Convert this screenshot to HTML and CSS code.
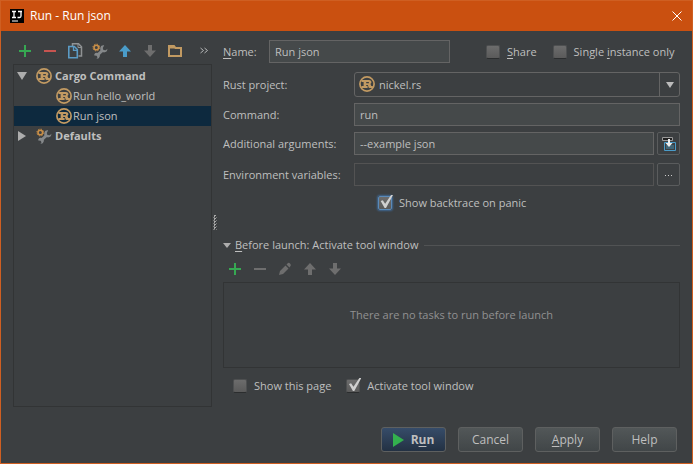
FILE: index.html
```html
<!DOCTYPE html>
<html lang="en">
<head>
<meta charset="utf-8">
<title>Run - Run json</title>
<link rel="stylesheet" href="styles.css">
</head>
<body>
<svg class="sprite" aria-hidden="true">
  <symbol id="plus" viewBox="0 0 16 16"><path d="M7 2h2v5h5v2H9v5H7V9H2V7h5z" shape-rendering="crispEdges"/></symbol>
  <symbol id="minus" viewBox="0 0 16 16"><path d="M2 7h12v2H2z" shape-rendering="crispEdges"/></symbol>
  <symbol id="up" viewBox="0 0 16 16"><path d="M8 2l6 6.500h-4V14H6V8.500H2z"/></symbol>
  <symbol id="down" viewBox="0 0 16 16"><path d="M8 14L2 7.500h4V2h4v5.500h4z"/></symbol>
  <symbol id="rust" viewBox="0 0 16 16">
    <circle cx="8" cy="8" r="7.100" fill="none" stroke="#c29a62" stroke-width="1.700"/>
    <path d="M2.500 4H10c2.600 0 3.300 3 1.300 4.100.9.500.6 1.900 1.200 1.900h1.300v2h-3.300c-1.600 0-.9-2.900-2-2.900H7.200V10h1.400v2H2.500v-2H4.600V6H2.500zM7.200 5.900v1.400h2.100c1 0 1-1.400 0-1.400z" fill="#c29a62" fill-rule="evenodd"/>
  </symbol>
  <symbol id="tools" viewBox="0 0 16 16">
    <path d="M10.500 7.500L5.500 12" stroke="#85888a" stroke-width="3"/>
    <path d="M12.200 2.200a3.600 3.600 0 1 0 3.200 3.600l-1.600 1.500-2.400-.4-.6-2z" fill="#85888a"/>
    <path d="M2.300 11.200a3 3 0 1 1 2.200 4.600l1-1.500-.9-1.600-2.300-.2z" fill="#85888a"/>
    <circle cx="4.300" cy="4.500" r="2.300" fill="none" stroke="#c98f48" stroke-width="1.600"/>
    <circle cx="4.300" cy="4.500" r="3.400" fill="none" stroke="#c98f48" stroke-width="1" stroke-dasharray="1.335 1.335"/>
  </symbol>
</svg>

<div class="window">
  <header class="titlebar">
    <svg class="logo" viewBox="0 0 14 14" aria-hidden="true">
      <path d="M0 0h14v14H0z" fill="#000"/>
      <path d="M2 2.500h4M4 2.500v6M2 8.500h4M8 2.500h4M11 2.500v4.500q0 1.500-1.500 1.500H7.500" fill="none" stroke="#fff" stroke-width="1.300"/>
      <path d="M2 12h6" stroke="#fff"/>
    </svg>
    <h1>Run - Run json</h1>
    <button class="close" aria-label="Close"><svg viewBox="0 0 10 10"><path d="M.5.5l9 9M9.500.5l-9 9" stroke="#fff"/></svg></button>
  </header>

  <main class="content">
    <section class="sidebar" aria-label="Configurations">
      <div class="toolbar">
        <button class="tool green" aria-label="Add"><svg><use href="#plus"/></svg></button>
        <button class="tool red" aria-label="Remove"><svg><use href="#minus"/></svg></button>
        <button class="tool" aria-label="Copy"><svg viewBox="0 0 16 16"><path d="M5.500 3V.8h6l3 3V13h-3" fill="none" stroke="#8f9294" stroke-width="1.500"/><path d="M11 1v3.500h3.500" fill="none" stroke="#8f9294"/><path d="M1.800 3.500h5.500l3 3v8.200H1.800z" fill="#3c3f41" stroke="#5b9bc5" stroke-width="1.600"/><path d="M6.500 3v4.300h4" fill="none" stroke="#5b9bc5" stroke-width="1.300"/></svg></button>
        <button class="tool" aria-label="Edit defaults"><svg><use href="#tools"/></svg></button>
        <button class="tool blue" aria-label="Move up"><svg><use href="#up"/></svg></button>
        <button class="tool gray" aria-label="Move down"><svg><use href="#down"/></svg></button>
        <button class="tool" aria-label="New folder"><svg viewBox="0 0 16 16"><path d="M2 13V3h5l1.500 2H14v8z" fill="none" stroke="#c29a62" stroke-width="2"/><path d="M2 3h5l1 2.500H2z" fill="#c29a62"/></svg></button>
        <button class="tool more" aria-label="More"><svg viewBox="0 0 16 16"><path d="M4.500 5l3 2.500-3 2.500M8.500 5l3 2.500-3 2.500" fill="none" stroke="#b4b6b7"/></svg></button>
      </div>
      <ul class="tree" role="tree">
        <li class="node group" role="treeitem" aria-expanded="true"><svg class="arrow" viewBox="0 0 10 10"><path d="M0 1h10L5 9z"/></svg><svg class="icon"><use href="#rust"/></svg><span>Cargo Command</span></li>
        <li class="node leaf" role="treeitem"><svg class="icon"><use href="#rust"/></svg><span>Run hello_world</span></li>
        <li class="node leaf selected" role="treeitem" aria-selected="true"><svg class="icon"><use href="#rust"/></svg><span>Run json</span></li>
        <li class="node group" role="treeitem" aria-expanded="false"><svg class="arrow" viewBox="0 0 10 10"><path d="M1 0v10l8-5z"/></svg><svg class="icon"><use href="#tools"/></svg><span>Defaults</span></li>
      </ul>
    </section>

    <div class="splitter" role="separator" aria-orientation="vertical"><span class="grip"></span></div>

    <form class="settings">
      <div class="name-row">
        <label for="name"><u>N</u>ame:</label>
        <input class="field" id="name" type="text" value="Run json">
        <label class="check share"><input type="checkbox"><span><u>S</u>hare</span></label>
        <label class="check"><input type="checkbox"><span>Single <u>i</u>nstance only</span></label>
      </div>

      <div class="form-row">
        <label for="project">Rust project:</label>
        <div class="combo">
          <select id="project"><option>nickel.rs</option></select>
          <svg class="combo-icon icon"><use href="#rust"/></svg>
          <span class="combo-arrow"><svg viewBox="0 0 8 6"><path d="M0 0h8L4 6z"/></svg></span>
        </div>
      </div>
      <div class="form-row">
        <label for="command">Command:</label>
        <input class="field" id="command" type="text" value="run">
      </div>
      <div class="form-row spaced">
        <label for="args">Additional arguments:</label>
        <input class="field" id="args" type="text" value="--example json">
        <button class="side-button" type="button" aria-label="Insert macro"><svg viewBox="0 0 16 16"><path d="M3.500 6.500h11v8h-11z" fill="#3c3f41" stroke="#4a9cc9"/><path d="M5 9h8v4H5z" fill="#3f6577"/><path d="M1.500 1.500h10v3h-10z" fill="#222" stroke="#999"/><path d="M7 3h2v4h2.500L8 11 4.500 7H7z" fill="#eee"/></svg></button>
      </div>
      <div class="form-row">
        <label for="env">Environment variables:</label>
        <input class="field readonly" id="env" type="text" readonly>
        <button class="side-button" type="button" aria-label="Edit environment variables"><svg viewBox="0 0 16 16"><path d="M4 8h1v1H4zM7 8h1v1H7zM10 8h1v1h-1z" fill="#ccc"/></svg></button>
      </div>
      <label class="check backtrace"><input type="checkbox" class="focused" checked><span>Show backtrace on panic</span></label>

      <div class="section-head">
        <svg class="small-arrow" viewBox="0 0 8 5"><path d="M0 0h8L4 5z"/></svg>
        <h2><u>B</u>efore launch: Activate tool window</h2>
        <hr>
      </div>
      <div class="toolbar tasks">
        <button type="button" class="tool green" aria-label="Add task"><svg><use href="#plus"/></svg></button>
        <button type="button" class="tool gray" aria-label="Remove task"><svg><use href="#minus"/></svg></button>
        <button type="button" class="tool gray" aria-label="Edit task"><svg viewBox="0 0 16 16"><path d="M2 14l1-4 5.500-5.500 3 3L6 13zM9.500 3.500L11 2q1-.6 2 .4t.8 2.200l-1.300 1.900z"/></svg></button>
        <button type="button" class="tool gray" aria-label="Move task up"><svg><use href="#up"/></svg></button>
        <button type="button" class="tool gray" aria-label="Move task down"><svg><use href="#down"/></svg></button>
      </div>
      <div class="task-list">There are no tasks to run before launch</div>
      <div class="options">
        <label class="check"><input type="checkbox"><span>Show this page</span></label>
        <label class="check"><input type="checkbox" checked><span>Activate tool window</span></label>
      </div>
    </form>
  </main>

  <footer class="actions">
    <button class="button primary"><svg viewBox="0 0 11 14"><path d="M0 0l11 7-11 7z" fill="#33b04e"/></svg><span>R<u>u</u>n</span></button>
    <button class="button">Cancel</button>
    <button class="button"><span><u>A</u>pply</span></button>
    <button class="button">Help</button>
  </footer>
</div>
</body>
</html>
```
FILE: styles.css
```css
* { box-sizing: border-box; }

body {
  margin: 0;
  background: #3c3f41;
  color: #bfbfbf;
  font: 11px/16px "Open Sans", "Noto Sans", sans-serif;
}

button, input, select { font: inherit; color: inherit; margin: 0; }
button { padding: 0; border: 0; background: none; }
svg { display: block; flex: none; }
u { text-decoration: underline; text-underline-offset: 2px; }

.sprite { position: absolute; width: 0; height: 0; }

.window {
  display: flex;
  flex-direction: column;
  min-height: 100vh;
  border: 1px solid #cf5f22;
}

.titlebar {
  display: flex;
  align-items: center;
  height: 30px;
  padding: 0 10px 0 9px;
  background: #ca5010;
  color: #fff;
}
.titlebar h1 { flex: 1; margin: 0 0 0 6px; font-size: 12px; font-weight: 400; }
.logo { width: 14px; height: 14px; }
.close svg { width: 10px; height: 10px; }

.content { display: flex; flex: 1; }

.sidebar {
  display: flex;
  flex-direction: column;
  flex: 0 0 198px;
  margin-left: 12px;
}
.toolbar { display: flex; gap: 9px; padding: 12px 0 5px 4px; }
.tool svg { width: 16px; height: 16px; }
.more { margin-left: 4px; }
.green { fill: #36a852; }
.red { fill: #c75450; }
.blue { fill: #4a9cc9; }
.gray { fill: #6e6e6e; }

.tree {
  flex: 1;
  margin: 0;
  padding: 1px 0;
  border: 1px solid #323435;
  list-style: none;
}
.node { display: flex; align-items: center; height: 20px; padding-left: 3px; }
.group { font-weight: 700; }
.group .icon { margin: 0 3px 0 9px; }
.leaf { padding-left: 42px; }
.leaf .icon { margin-right: 1px; }
.selected { background: #0d293e; }
.arrow { width: 10px; height: 10px; fill: #adadad; }
.icon { width: 16px; height: 16px; }

.splitter { display: flex; flex: 0 0 11px; align-items: center; padding-top: 7px; }
.grip {
  width: 4px;
  height: 15px;
  margin-left: 1px;
  background: conic-gradient(#aaa 25%, transparent 0 50%, #777 0 75%, transparent 0) 0 0 / 3px 3px;
}

.settings {
  display: flex;
  flex-direction: column;
  flex: 1;
  min-width: 0;
  padding: 9px 12px 13px 0;
}

.name-row { display: flex; align-items: center; margin-bottom: 9px; }
.name-row > label:first-child { width: 46px; }
.name-row .field { max-width: 181px; }
.share { margin: 0 16px 0 36px; }

.form-row { display: flex; align-items: center; margin-bottom: 6px; }
.form-row > label { flex: 0 0 131px; }
.spaced { margin-bottom: 8px; }

.field {
  flex: 1;
  min-width: 0;
  height: 23px;
  padding: 0 5px;
  border: 1px solid #646464;
  background: #45494a;
  outline: 0;
}
.readonly { background: #3c3f41; border-color: #535353; }

.combo { position: relative; flex: 1; }
.combo select {
  display: block;
  width: 100%;
  height: 25px;
  padding: 0 24px;
  border: 1px solid #646464;
  border-radius: 3px;
  background: #3c3f41;
  appearance: none;
}
.combo-icon { position: absolute; left: 5px; top: 4px; pointer-events: none; }
.combo-arrow {
  position: absolute;
  inset: 0 0 0 auto;
  display: grid;
  place-items: center;
  width: 21px;
  border-left: 1px solid #646464;
  pointer-events: none;
}
.combo-arrow svg { width: 8px; height: 6px; fill: #bbb; }

.side-button {
  display: grid;
  place-items: center;
  width: 23px;
  height: 23px;
  margin-left: 3px;
  border: 1px solid #5a5c5d;
  border-radius: 2px;
}
.side-button svg { width: 16px; height: 16px; }

.check { display: flex; align-items: center; gap: 7px; white-space: nowrap; }
.check input {
  position: relative;
  width: 14px;
  height: 14px;
  border: 1px solid #4e5051;
  border-bottom-color: #2b2d2e;
  border-radius: 2px;
  background: linear-gradient(#6c6c6c, #5a5a5a);
  appearance: none;
}
.check input:checked::before {
  content: "";
  position: absolute;
  inset: -2px -2px 0 0;
  background: #d0d0d0;
  clip-path: polygon(12% 42%, 27% 38%, 44% 62%, 86% 0, 100% 0, 50% 92%, 40% 92%);
}
.check .focused { border-color: #5b8ab8; box-shadow: 0 0 2px 1px #3f6791; }
.backtrace { align-self: flex-start; margin: 3px 0 0 155px; }

.section-head { display: flex; align-items: center; margin-top: 26px; }
.section-head h2 { margin: 0 6px 0 4px; font-size: 11px; font-weight: 400; }
.section-head hr { flex: 1; margin: 0; border: 0; border-top: 1px solid #515354; }
.small-arrow { width: 8px; height: 5px; fill: #adadad; }
.tasks { padding-top: 8px; }

.task-list {
  flex: 1;
  padding-top: 24px;
  border: 1px solid #323435;
  color: #919191;
  text-align: center;
}
.options { display: flex; gap: 15px; margin: 10px 0 0 10px; }

.actions {
  display: flex;
  justify-content: flex-end;
  gap: 12px;
  padding: 20px 15px 11px;
  font-size: 12px;
}
.button {
  display: flex;
  align-items: center;
  justify-content: center;
  gap: 7px;
  width: 65px;
  height: 25px;
  border: 1px solid #5e6060;
  border-radius: 3px;
  background: linear-gradient(#525758, #414648);
}
.primary { background: linear-gradient(#364c69, #233143); font-weight: 700; }
.primary svg { width: 11px; height: 14px; }
```
